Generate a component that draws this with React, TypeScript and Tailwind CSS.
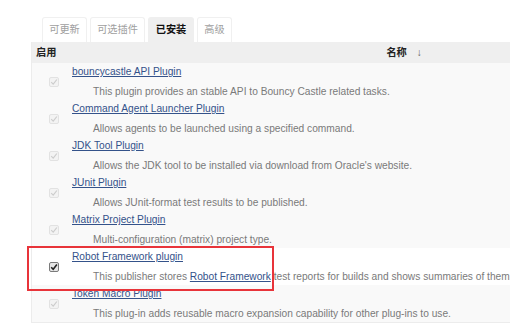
const plugins = [
  {
    name: "bouncycastle API Plugin",
    desc: "This plugin provides an stable API to Bouncy Castle related tasks.",
  },
  {
    name: "Command Agent Launcher Plugin",
    desc: "Allows agents to be launched using a specified command.",
  },
  {
    name: "JDK Tool Plugin",
    desc: "Allows the JDK tool to be installed via download from Oracle's website.",
  },
  {
    name: "JUnit Plugin",
    desc: "Allows JUnit-format test results to be published.",
  },
  {
    name: "Matrix Project Plugin",
    desc: "Multi-configuration (matrix) project type.",
  },
  {
    name: "Robot Framework plugin",
    desc: "",
    active: true,
  },
  {
    name: "Token Macro Plugin",
    desc: "This plug-in adds reusable macro expansion capability for other plug-ins to use.",
  },
];

const tabs = [
  { label: "可更新", w: "w-[45px]" },
  { label: "可选插件", w: "w-[55px]" },
  { label: "已安装", w: "w-[46px]", active: true },
  { label: "高级", w: "w-[35px]" },
];

export default function App() {
  return (
    <div className="relative h-[335px] w-[510px] overflow-hidden bg-white font-['Liberation_Sans','Noto_Sans_CJK_SC',sans-serif]">
      <div className="pl-[31px] pt-[17px]">
        <div className="flex h-[25px] gap-[3px] pl-[11px]">
          {tabs.map((t) => (
            <Tab key={t.label} label={t.label} w={t.w} active={!!t.active} />
          ))}
        </div>

        <div className="w-[500px] border-b border-l border-[#ececec]">
          <div className="flex h-[21px] items-center bg-[#efefef] text-[10.2px] font-bold text-[#222]">
            <div className="pl-[4px]">启用</div>
            <div className="ml-[330px] flex items-center gap-[10px]">
              <span>名称</span>
              <span className="font-normal text-[#666]">↓</span>
            </div>
          </div>

          {plugins.map((p) => (
            <Row key={p.name} plugin={p} />
          ))}
        </div>
      </div>

      <div className="absolute left-[27px] top-[246px] h-[45px] w-[247px] border-2 border-[#e8343a]" />
    </div>
  );
}

function Tab({ label, w, active }: { label: string; w: string; active: boolean }) {
  if (active) {
    return (
      <div className={`flex ${w} items-center justify-center rounded-t-[3px] bg-[#efefef] text-[10.2px] font-bold text-[#111]`}>
        {label}
      </div>
    );
  }

  return (
    <div className={`flex ${w} items-center justify-center rounded-t-[3px] border border-b-0 border-[#f0f0f0] text-[10.2px] text-[#a0a0a0]`}>
      {label}
    </div>
  );
}

function Row({
  plugin,
}: {
  plugin: { name: string; desc: string; active?: boolean };
}) {
  return (
    <div
      className={`flex h-[37px] ${plugin.active ? "bg-white" : "bg-[#f9f9f9]"}`}
    >
      <div className="flex w-[40px] items-center justify-center pl-[3px]">
        <Check active={!!plugin.active} />
      </div>
      <div className="flex flex-col pt-[2px] text-[10.2px] leading-[14px]">
        <a className="text-[#34528a] underline decoration-[#34528a]">
          {plugin.name}
        </a>
        <div className="mt-[6px] whitespace-nowrap pl-[21px] text-[#7a7a7a]">
          {plugin.active ? (
            <>
              This publisher stores{" "}
              <a className="text-[#34528a] underline">Robot Framework</a> test
              reports for builds and shows summaries of them
            </>
          ) : (
            plugin.desc
          )}
        </div>
      </div>
    </div>
  );
}

function Check({ active }: { active: boolean }) {
  if (active) {
    return (
      <span className="flex h-[10px] w-[10px] items-center justify-center rounded-[2px] border border-[#7a7a7a] bg-[#e6e6e6]">
        <svg width="8" height="8" viewBox="0 0 8 8">
          <path
            d="M1.2 4.2 L3.2 6.2 L6.9 1.5"
            fill="none"
            stroke="#222"
            strokeWidth="1.6"
          />
        </svg>
      </span>
    );
  }

  return (
    <span className="flex h-[10px] w-[10px] items-center justify-center rounded-[2px] border border-[#e2e2e2] bg-[#f3f3f3]">
      <svg width="8" height="8" viewBox="0 0 8 8">
        <path
          d="M1.2 4.2 L3.2 6.2 L6.9 1.5"
          fill="none"
          stroke="#cdcdcd"
          strokeWidth="1.2"
        />
      </svg>
    </span>
  );
}
